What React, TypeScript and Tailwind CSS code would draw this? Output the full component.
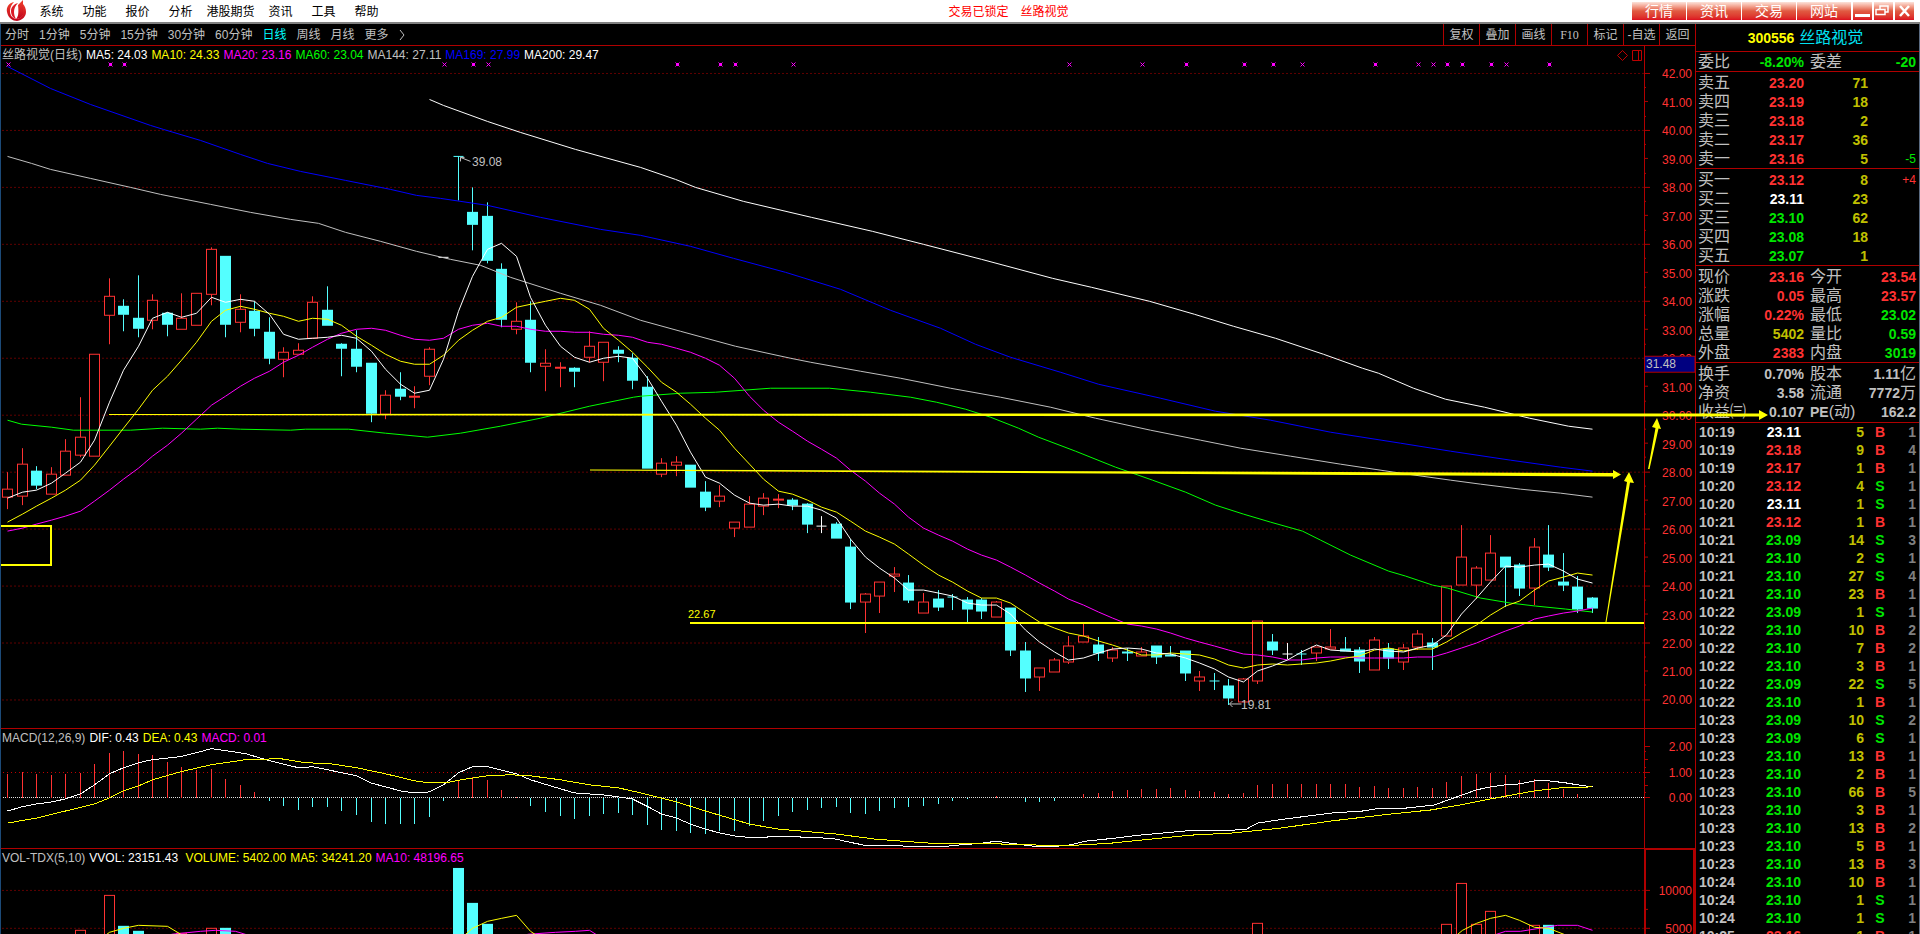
const RED = "#ff3232";
const CYAN = "#54ffff";
const LINE = "#b00000";

const menus = ["系统", "功能", "报价", "分析", "港股期货", "资讯", "工具", "帮助"];
const periods = ["分时", "1分钟", "5分钟", "15分钟", "30分钟", "60分钟", "日线", "周线", "月线", "更多"];
const tools = ["复权", "叠加", "画线", "F10", "标记", "-自选", "返回"];
const sites = ["行情", "资讯", "交易", "网站"];

// kind, high, body top, body bottom, low (all in chart y units)
type Candle = [string, number, number, number, number];
const candles: Candle[] = [
  ["r", 472, 489, 497, 509], ["r", 448, 464, 496, 505], ["c", 466, 471, 485, 489], ["r", 467, 474, 494, 494],
  ["r", 439, 451, 475, 475], ["r", 397, 437, 455, 457], ["r", 354, 354, 456, 456], ["r", 278, 296, 315, 344],
  ["c", 299, 306, 314, 331], ["c", 275, 318, 328, 337], ["r", 294, 300, 320, 329], ["c", 312, 313, 324, 336],
  ["r", 293, 318, 329, 329], ["r", 293, 293, 325, 325], ["r", 247, 249, 294, 305], ["c", 256, 256, 324, 337],
  ["r", 294, 309, 322, 332], ["c", 301, 311, 328, 336], ["c", 317, 332, 358, 364], ["r", 347, 352, 359, 377],
  ["r", 343, 350, 354, 354], ["r", 296, 302, 338, 338], ["c", 286, 310, 325, 325], ["c", 343, 344, 348, 376],
  ["c", 330, 349, 366, 372], ["c", 363, 363, 413, 422], ["r", 390, 395, 414, 419], ["c", 372, 389, 396, 400],
  ["r", 386, 396, 397, 408], ["r", 347, 349, 376, 385], ["w", 257, 257, 257, 257], ["c", 156, 156, 156, 200],
  ["c", 187, 212, 224, 250], ["c", 202, 216, 260, 263], ["c", 263, 269, 319, 327], ["r", 302, 321, 329, 334],
  ["c", 301, 320, 362, 372], ["r", 349, 363, 366, 391], ["r", 362, 367, 368, 387], ["c", 367, 368, 371, 387],
  ["r", 331, 346, 357, 362], ["r", 342, 342, 362, 381], ["c", 346, 350, 353, 362], ["c", 353, 358, 380, 389],
  ["c", 376, 387, 468, 468], ["r", 458, 463, 474, 477], ["r", 456, 462, 465, 476], ["c", 465, 465, 487, 487],
  ["c", 481, 492, 507, 511], ["r", 485, 496, 501, 507], ["r", 522, 522, 528, 537], ["r", 496, 504, 527, 527],
  ["r", 493, 498, 506, 515], ["r", 494, 499, 500, 508], ["c", 498, 500, 505, 510], ["c", 503, 504, 524, 533],
  ["w", 516, 526, 526, 533], ["c", 522, 524, 538, 538], ["c", 539, 547, 602, 609], ["r", 593, 594, 602, 633],
  ["r", 582, 582, 596, 613], ["r", 567, 574, 576, 592], ["c", 575, 583, 600, 603], ["r", 593, 602, 613, 613],
  ["c", 590, 599, 607, 611], ["c", 594, 597, 597, 610], ["c", 597, 600, 609, 623], ["c", 598, 600, 611, 619],
  ["r", 601, 602, 617, 617], ["c", 608, 608, 650, 656], ["c", 642, 651, 678, 692], ["r", 668, 668, 677, 691],
  ["r", 658, 660, 672, 672], ["r", 636, 646, 662, 664], ["r", 623, 636, 642, 642], ["c", 637, 645, 653, 661],
  ["r", 647, 650, 658, 662], ["c", 648, 652, 653, 661], ["r", 647, 652, 656, 656], ["c", 646, 646, 657, 664],
  ["c", 646, 655, 656, 656], ["c", 651, 651, 673, 681], ["r", 671, 677, 681, 691], ["c", 673, 681, 681, 690],
  ["c", 679, 686, 698, 705], ["r", 678, 679, 702, 702], ["r", 621, 621, 681, 684], ["c", 634, 642, 650, 655],
  ["w", 643, 654, 654, 659], ["c", 650, 654, 654, 665], ["r", 647, 647, 653, 661], ["r", 629, 647, 649, 649],
  ["c", 637, 649, 651, 651], ["c", 647, 650, 661, 673], ["r", 637, 640, 670, 670], ["c", 643, 649, 658, 669],
  ["r", 644, 648, 662, 670], ["r", 630, 634, 647, 650], ["c", 638, 643, 647, 670], ["r", 586, 586, 636, 636],
  ["r", 525, 557, 585, 585], ["r", 566, 568, 585, 599], ["r", 535, 553, 580, 580], ["c", 557, 557, 567, 607],
  ["c", 563, 565, 588, 596], ["r", 538, 547, 588, 605], ["c", 525, 555, 567, 571], ["c", 553, 582, 585, 591],
  ["c", 576, 587, 609, 613], ["c", 597, 598, 608, 613],
];

const macdBars = [
  774, 772, 774, 775, 774, 773, 764, 753, 751, 754, 755, 762, 767, 770, 769, 779, 785, 792, 801, 806,
  810, 807, 807, 811, 815, 822, 824, 824, 824, 817, 801, 781, 777, 780, 790, 797, 806, 812, 816, 819,
  816, 814, 813, 815, 825, 830, 831, 833, 834, 831, 831, 826, 821, 816, 812, 810, 808, 807, 813, 814,
  811, 808, 807, 806, 804, 801, 799, 798, 796, 798, 802, 802, 801, 798, 794, 793, 791, 790, 789, 789,
  788, 790, 791, 792, 794, 793, 785, 784, 784, 784, 784, 784, 784, 787, 786, 788, 788, 787, 788, 782,
  776, 774, 773, 775, 780, 779, 783, 789, 794, 798,
];

const volumes: [number, number][] = [
  [5, 930], [7, 895], [8, 926], [9, 931], [12, 933], [14, 928], [15, 928], [31, 868], [32, 903],
  [33, 924], [86, 923], [99, 924], [100, 883], [101, 924], [102, 911], [105, 925], [106, 925],
];

const signals = [0, 7, 8, 30, 32, 33, 46, 49, 50, 54, 73, 78, 81, 85, 87, 89, 94, 97, 98, 99, 100, 102, 103, 106];
const strongSignals = [7, 8, 32, 46, 49, 50, 81, 85, 87, 94, 99, 100, 102, 106];

const ma60 = "7,420 21,424 51,427 73,430 130,430 162,428 200,429 217,428 240,429 290,430 305,429 348,429 385,433 427,437 460,433 500,426 540,418 589,406 633,397 640,396 680,393 715,392 770,388 829,388 870,392 910,397 936,402 965,409 990,417 1018,428 1038,437 1075,451 1115,467 1152,480 1185,492 1215,505 1243,514 1270,522 1302,531 1320,540 1350,555 1388,571 1405,576 1432,585 1447,588 1480,598 1510,603 1535,606 1565,609 1592,612";
const ma144 = "7,156 31,163 50,169 90,178 130,187 160,194 210,204 250,212 290,219 318,223 345,232 380,241 416,251 450,259 480,265 510,277 560,293 600,305 640,320 680,331 735,346 790,358 810,362 860,371 900,378 950,388 1000,397 1050,407 1095,418 1150,430 1200,440 1240,448 1290,456 1340,464 1400,473 1450,480 1480,484 1520,489 1560,493 1592,497";
const ma169 = "7,66 50,88 90,104 150,125 163,129 200,140 240,154 267,163 300,171 345,180 390,189 416,195 440,198 487,205 540,217 600,229 640,235 690,246 733,258 785,272 840,289 890,310 940,328 975,344 1010,357 1060,372 1098,384 1160,398 1215,411 1270,420 1330,432 1400,443 1450,451 1510,460 1560,467 1592,471";
const ma200 = "429,99 443,105 487,121 520,132 575,149 640,167 675,179 695,187 743,201 811,217 872,231 923,244 981,259 1052,278 1091,287 1149,301 1194,314 1233,326 1275,338 1323,354 1362,368 1378,373 1413,388 1445,399 1484,407 1529,418 1568,426 1592,429";
const dif = "7,811 21,807 36,804 51,802 65,799 80,794 94,785 109,774 123,768 138,763 152,760 180,757 196,753 211,749 225,751 245,754 269,761 298,768 312,767 327,770 356,776 370,783 385,787 400,791 414,793 429,792 443,785 458,773 472,767 487,767 516,774 530,780 560,789 574,793 603,795 618,797 632,799 640,803 648,807 661,814 676,818 690,824 705,829 720,833 735,836 746,837 766,837 772,836 795,836 801,837 827,838 836,839 849,842 864,845 898,845 904,846 946,846 956,845 981,843 996,841 1010,843 1033,846 1056,846 1068,845 1085,841 1114,838 1139,835 1172,832 1194,830 1233,830 1246,829 1257,823 1284,819 1331,813 1362,811 1375,809 1397,809 1434,805 1445,801 1462,795 1476,790 1490,787 1505,785 1520,784 1534,781 1548,781 1565,783 1577,785 1592,787";
const dea = "7,823 36,818 65,811 94,804 109,798 123,791 138,786 152,780 180,772 211,765 245,760 280,759 305,763 330,764 356,768 385,774 414,781 429,783 446,783 460,780 487,776 510,775 530,776 560,780 589,785 618,788 640,793 676,802 705,811 749,824 778,829 837,834 875,839 930,843 1020,844 1040,845 1075,845 1110,843 1150,839 1190,835 1230,833 1280,828 1330,821 1390,814 1430,810 1460,805 1490,799 1534,791 1560,788 1592,787";
const volMa5 = ["105,935 109,932 123,928 138,925 167,926 182,935", "464,935 472,928 487,921 501,918 516,915 530,931 536,935", "1456,935 1462,930 1476,923 1490,918 1505,915 1519,920 1534,927 1548,928 1566,935"];
const volMa10 = ["171,934 200,931 215,930 235,931 248,935", "527,934 555,932 575,931 589,930 597,935", "1493,935 1505,931 1520,931 1545,927 1557,925 1577,925 1592,930"];

const xAt = (i: number) => Math.round(7 + 14.54 * i);
const closes = candles.map(([kind, , top, bottom]) => (kind === "c" ? bottom : top));

// moving average of the closes; lead holds the values that need older bars
const average = (n: number, lead: number[]) =>
  closes
    .map((_, i) => {
      const y = i < n - 1 ? lead[i] : closes.slice(i - n + 1, i + 1).reduce((a, b) => a + b, 0) / n;
      return `${xAt(i)},${Math.round(y)}`;
    })
    .join(" ");

const ma5 = average(5, [498, 492, 490, 483]);
const ma10 = average(10, [522, 514, 506, 498, 490, 480, 465, 446, 428]);
const ma20 = average(20, [531, 528, 524, 520, 516, 511, 501, 490, 479, 468, 456, 445, 433, 419, 405, 396, 386, 378, 371]);

const priceY = (p: number) => Math.round(73 + (42 - p) * 28.48);

const sells = [
  ["卖五", "23.20", "71", ""],
  ["卖四", "23.19", "18", ""],
  ["卖三", "23.18", "2", ""],
  ["卖二", "23.17", "36", ""],
  ["卖一", "23.16", "5", "-5"],
];
const buys = [
  ["买一", "23.12", "8", "+4"],
  ["买二", "23.11", "23", ""],
  ["买三", "23.10", "62", ""],
  ["买四", "23.08", "18", ""],
  ["买五", "23.07", "1", ""],
];

const R = "text-[#ff3232]";
const G = "text-[#00e600]";
const Y = "text-[#c0c000]";
const S = "text-[#c0c0c0]";
const stats = [
  ["现价", "23.16", R], ["今开", "23.54", R],
  ["涨跌", "0.05", R], ["最高", "23.57", R],
  ["涨幅", "0.22%", R], ["最低", "23.02", G],
  ["总量", "5402", Y], ["量比", "0.59", G],
  ["外盘", "2383", R], ["内盘", "3019", G],
];
const basics = [
  ["换手", "0.70%", ""], ["股本", "1.11", "亿"],
  ["净资", "3.58", ""], ["流通", "7772", "万"],
  ["收益㈢", "0.107", ""], ["PE(动)", "162.2", ""],
];

const ticks = [
  "10:19 23.11 5 B 1", "10:19 23.18 9 B 4", "10:19 23.17 1 B 1", "10:20 23.12 4 S 1", "10:20 23.11 1 S 1",
  "10:21 23.12 1 B 1", "10:21 23.09 14 S 3", "10:21 23.10 2 S 1", "10:21 23.10 27 S 4", "10:21 23.10 23 B 1",
  "10:22 23.09 1 S 1", "10:22 23.10 10 B 2", "10:22 23.10 7 B 2", "10:22 23.10 3 B 1", "10:22 23.09 22 S 5",
  "10:22 23.10 1 B 1", "10:23 23.09 10 S 2", "10:23 23.09 6 S 1", "10:23 23.10 13 B 1", "10:23 23.10 2 B 1",
  "10:23 23.10 66 B 5", "10:23 23.10 3 B 1", "10:23 23.10 13 B 2", "10:23 23.10 5 B 1", "10:23 23.10 13 B 3",
  "10:24 23.10 10 B 1", "10:24 23.10 1 S 1", "10:24 23.10 1 S 1", "10:25 23.16 1 B 1",
].map((t) => t.split(" "));

const priceColor = (p: string) => (p === "23.11" ? "text-white" : Number(p) > 23.11 ? R : G);

const Logo = () => (
  <svg viewBox="0 0 22 22" className="ml-[5px] h-[22px] w-[22px]" aria-hidden="true">
    <defs>
      <linearGradient id="logo" x1="0" y1="0" x2="0" y2="1">
        <stop offset="0" stopColor="#f0402c" />
        <stop offset="1" stopColor="#c0041c" />
      </linearGradient>
    </defs>
    <path d="M9 2C4 3 1 7 2 12c1 6 6 9 10 9 6-1 9-5 9-9 0-3-1-6-3-8v10c-1 3-4 5-7 5-4-1-6-4-6-8 0-4 2-7 4-9z" fill="url(#logo)" />
    <path d="M13 5l5-5v15c-2 3-4 4-7 4 2-2 3-5 2-14z" fill="url(#logo)" />
    <path d="M6 11c0-4 3-7 7-8-3 3-4 6-4 9 0 3 1 5 2 7-3-1-5-4-5-8z" fill="#dc1c28" />
  </svg>
);

const MenuBar = () => (
  <header className="flex h-6 shrink-0 items-center border-b-2 border-[#808080] bg-white text-xs text-black">
    <Logo />
    <nav className="ml-[3px] flex pt-px">
      {menus.map((m) => (
        <button key={m} className={m.length > 2 ? "w-[57px]" : "w-[43px]"}>{m}</button>
      ))}
    </nav>
    <div className="flex flex-1 justify-center gap-3 pt-px pr-[3px] text-[#ff0000]">
      <span>交易已锁定</span>
      <span>丝路视觉</span>
    </div>
    <div className="flex gap-px pr-[6px] text-sm leading-4 text-white">
      {sites.map((s) => (
        <button key={s} className="h-[18px] w-[54px] bg-linear-to-b from-[#fbe3da] via-[#e05a42] via-50% to-[#dc0c20]">{s}</button>
      ))}
      <div className="ml-px flex gap-[2px]">
        <button aria-label="最小化" className="h-[18px] w-[19px] bg-linear-to-b from-[#fbe3da] via-[#e05a42] via-50% to-[#dc0c20]">
          <svg viewBox="0 0 19 18" className="block h-full w-full"><path d="M2 13.5h15" stroke="#fff" strokeWidth="3" /></svg>
        </button>
        <button aria-label="还原" className="h-[18px] w-[19px] bg-linear-to-b from-[#fbe3da] via-[#e05a42] via-50% to-[#dc0c20]">
          <svg viewBox="0 0 19 18" className="block h-full w-full" fill="none" stroke="#fff" strokeWidth="1.5">
            <path d="M6 7V4h8v6h-3M2 7.500h9v5h-9z" />
          </svg>
        </button>
        <button aria-label="关闭" className="h-[18px] w-[19px] bg-linear-to-b from-[#fbe3da] via-[#e05a42] via-50% to-[#dc0c20]">
          <svg viewBox="0 0 19 18" className="block h-full w-full"><path d="M5 4l9 10M14 4L5 14" stroke="#fff" strokeWidth="2.500" /></svg>
        </button>
      </div>
    </div>
  </header>
);

const Toolbar = () => (
  <div className="flex h-[22px] shrink-0 justify-between border-b border-[#b00000]">
    <div className="flex items-center gap-[10px] pl-1">
      {periods.map((p) => (
        <button key={p} className={p === "日线" ? "text-[#00ffff]" : ""}>{p}</button>
      ))}
      <svg viewBox="0 0 6 12" className="h-3 w-[6px]" fill="none" stroke="#c0c0c0"><path d="M1 1l4 5-4 5" /></svg>
    </div>
    <div className="flex">
      {tools.map((t) => (
        <button key={t} className={`w-9 border-l border-[#b00000] whitespace-nowrap ${t === "F10" ? "font-['Liberation_Serif',serif]" : ""}`}>{t}</button>
      ))}
    </div>
  </div>
);

const Legend = ({ items }: { items: [string, string][] }) => (
  <div className="absolute top-px left-px flex gap-1 leading-4 whitespace-pre">
    {items.map(([text, color]) => (
      <span key={text} className={color}>{text}</span>
    ))}
  </div>
);

const Grid = ({ ys }: { ys: number[] }) => (
  <g stroke="#c00000" strokeDasharray="1 3">
    {ys.map((y) => <path key={y} d={`M2 ${y}H1644`} />)}
  </g>
);

const Line = ({ points, color }: { points: string; color: string }) => (
  <polyline points={points} fill="none" stroke={color} />
);

const PricePane = () => (
  <section className="flex min-h-0 flex-[684_0_0px] border-b border-[#b00000]">
    <div className="relative min-w-0 flex-1">
      <svg viewBox="1 46 1643 683" preserveAspectRatio="none" className="absolute h-full w-full" shapeRendering="crispEdges">
        <g transform="translate(0.5 0.5)">
          <Grid ys={[42, 40, 38, 36, 34, 32, 30, 28, 26, 24, 22, 20].map(priceY)} />
          {candles.map(([kind, high, top, bottom, low], i) => {
            const x = xAt(i);
            const color = kind === "r" ? RED : kind === "c" ? CYAN : "#fff";
            return (
              <g key={i} stroke={color} fill={kind === "r" ? "#000" : color}>
                <path d={`M${x} ${high}V${top}M${x} ${bottom}V${low}`} />
                {top === bottom ? <path d={`M${x - 5} ${top}h10`} /> : <rect x={x - 5} y={top} width={10} height={bottom - top} />}
              </g>
            );
          })}
          <Line points={ma200} color="#ffffff" />
          <Line points={ma169} color="#0000ff" />
          <Line points={ma144} color="#c0c0c0" />
          <Line points={ma60} color="#00ff00" />
          <Line points={ma20} color="#ff00ff" />
          <Line points={ma10} color="#ffff00" />
          <Line points={ma5} color="#ffffff" />
          <g stroke="#ff00ff" fill="#ff00ff">
            {signals.map((s) => (
              <path key={s} d={`M${xAt(s) - 1} 62l4 4M${xAt(s) + 3} 62l-4 4${strongSignals.includes(s) ? `M${xAt(s)} 63h2v2h-2z` : ""}`} />
            ))}
          </g>
          <path d="M1622 50l5 5-5 5-5-5zM1632 50h9v10h-9zM1638 50v10" fill="none" stroke="#c00000" />
          <path d="M470 161l-10-4m0 4v-4h4M1241 704h-12m3-3l-3 3 3 3" fill="none" stroke="#c0c0c0" />
          <path d="M0 526H50V565H0M689 623H1644" fill="none" stroke="#ffff00" strokeWidth="2" />
        </g>
        <text x="472" y="166" fontSize="12" fill="#c0c0c0">39.08</text>
        <text x="1241" y="710" fontSize="12" fill="#c0c0c0">19.81</text>
        <text x="688" y="618" fontSize="11" fill="#ffff00">22.67</text>
      </svg>
      <Legend
        items={[
          ["丝路视觉(日线)", S],
          ["MA5: 24.03", "text-white"],
          ["MA10: 24.33", "text-[#ffff00]"],
          ["MA20: 23.16", "text-[#ff00ff]"],
          ["MA60: 23.04", "text-[#00ff00]"],
          ["MA144: 27.11", S],
          ["MA169: 27.99", "text-[#0000ff]"],
          ["MA200: 29.47", "text-white"],
        ]}
      />
    </div>
    <div className="w-[51px] border-l border-[#b00000]">
      <svg viewBox="1645 46 50 683" preserveAspectRatio="none" className="block h-full w-full" shapeRendering="crispEdges">
        {Array.from({ length: 23 }, (_, i) => 42 - i).map((p) => (
          <g key={p}>
            <path d={`M1645 ${priceY(p) + 0.5}h${p % 2 ? 3 : 5}${p > 20 ? `M1645 ${priceY(p - 0.5) + 0.5}h1` : ""}`} stroke={LINE} />
            <text x="1692" y={priceY(p) + (p % 2 ? 6 : 5)} textAnchor="end" fontSize="12" fill={RED}>{p}.00</text>
          </g>
        ))}
        <rect x="1644" y="356.5" width="51" height="16" fill="#000080" stroke={LINE} />
        <text x="1646" y="368" fontSize="12" fill="#c0c0c0">31.48</text>
      </svg>
    </div>
  </section>
);

const MacdPane = () => (
  <section className="flex min-h-0 flex-[119_0_0px] border-b border-[#b00000]">
    <div className="relative min-w-0 flex-1">
      <svg viewBox="1 730 1643 118" preserveAspectRatio="none" className="absolute h-full w-full" shapeRendering="crispEdges">
        <g transform="translate(0.5 0.5)">
          <Grid ys={[773]} />
          <path d="M2 798H1644" stroke="#e0e0e0" strokeDasharray="1 1" />
          {macdBars.map((y, i) => (
            <path key={i} d={`M${xAt(i)} 798V${y}`} stroke={y < 798 ? RED : CYAN} />
          ))}
          <Line points={dif} color="#ffffff" />
          <Line points={dea} color="#ffff00" />
        </g>
      </svg>
      <Legend
        items={[
          ["MACD(12,26,9)", S],
          ["DIF: 0.43", "text-white"],
          ["DEA: 0.43", "text-[#ffff00]"],
          ["MACD: 0.01", "text-[#ff00ff]"],
        ]}
      />
    </div>
    <div className="w-[51px] border-l border-[#b00000]">
      <svg viewBox="1645 730 50 118" preserveAspectRatio="none" className="block h-full w-full" shapeRendering="crispEdges">
        <path d="M1645 747.500h5m-5 26h5m-5 25h5M1645 760.500h3m-3 26h3M1645 752.500h1m-1 16h1m-1 10h1m-1 15h1" stroke={LINE} />
        <g fontSize="12" fill={RED} textAnchor="end">
          <text x="1692" y="752">2.00</text>
          <text x="1692" y="778">1.00</text>
          <text x="1692" y="803">0.00</text>
        </g>
      </svg>
    </div>
  </section>
);

const VolumePane = () => (
  <section className="flex min-h-0 flex-[85_0_0px]">
    <div className="relative min-w-0 flex-1">
      <svg viewBox="1 849 1643 85" preserveAspectRatio="none" className="absolute h-full w-full" shapeRendering="crispEdges">
        <g transform="translate(0.5 0.5)">
          <Grid ys={[890, 928]} />
          {volumes.map(([i, y]) => (
            <rect
              key={i}
              x={xAt(i) - 5}
              y={y}
              width={10}
              height={940 - y}
              stroke={candles[i][0] === "r" ? RED : CYAN}
              fill={candles[i][0] === "r" ? "#000" : CYAN}
            />
          ))}
          {volMa10.map((p) => <Line key={p} points={p} color="#ff00ff" />)}
          {volMa5.map((p) => <Line key={p} points={p} color="#ffff00" />)}
        </g>
      </svg>
      <Legend
        items={[
          ["VOL-TDX(5,10)", S],
          ["VVOL: 23151.43 ", "text-white"],
          ["VOLUME: 5402.00", "text-[#ffff00]"],
          ["MA5: 34241.20", "text-[#ffff00]"],
          ["MA10: 48196.65", "text-[#ff00ff]"],
        ]}
      />
    </div>
    <div className="w-[51px] border-x-2 border-t border-[#b00000]">
      <svg viewBox="1646 850 47 84" preserveAspectRatio="none" className="block h-full w-full" shapeRendering="crispEdges">
        <path d="M1646 890.500h4m-4 38h4m-4-19h2" stroke={LINE} />
        <g fontSize="12" fill={RED} textAnchor="end">
          <text x="1692" y="895">10000</text>
          <text x="1692" y="933">5000</text>
        </g>
      </svg>
    </div>
  </section>
);

const OrderRows = ({ rows }: { rows: string[][] }) => (
  <div className="border-b border-[#b00000] pt-px">
    <table className="w-full table-fixed leading-4">
      <tbody>
        {rows.map(([label, price, qty, diff]) => (
          <tr key={label} className="h-[19px]">
            <th scope="row" className="w-[50px] pl-[2px] text-left text-base leading-4 font-normal">{label}</th>
            <td className={`w-[58px] text-right text-sm leading-4 font-bold ${priceColor(price)}`}>{price}</td>
            <td className="w-16 text-right text-sm leading-4 font-bold text-[#c0c000]">{qty}</td>
            <td className={`pr-[3px] text-right ${diff.startsWith("-") ? G : R}`}>{diff}</td>
          </tr>
        ))}
      </tbody>
    </table>
  </div>
);

const QuotePanel = () => (
  <aside className="flex w-[225px] shrink-0 flex-col overflow-hidden border-x border-l-[#b00000] border-r-[#5a6a80]">
    <h1 className="flex h-7 shrink-0 items-center justify-center gap-[5px] border-b border-[#b00000] pt-px pr-1">
      <span className="text-sm font-bold text-[#ffff00]">300556</span>
      <span className="text-base text-[#00e0f0]">丝路视觉</span>
    </h1>
    <dl className="grid h-5 shrink-0 grid-cols-2 items-center gap-x-[6px] border-b border-[#b00000] pr-[3px] pl-[2px]">
      {[["委比", "-8.20%"], ["委差", "-20"]].map(([k, v]) => (
        <div key={k} className="flex h-[19px] items-center justify-between">
          <dt className="text-base leading-4">{k}</dt>
          <dd className="text-sm leading-4 font-bold text-[#00e600]">{v}</dd>
        </div>
      ))}
    </dl>
    <OrderRows rows={sells} />
    <OrderRows rows={buys} />
    <dl className="grid grid-cols-2 gap-x-[6px] border-b border-[#b00000] pt-px pr-[3px] pl-[2px]">
      {stats.map(([k, v, color]) => (
        <div key={k} className="flex h-[19px] items-center justify-between">
          <dt className="text-base leading-4">{k}</dt>
          <dd className={`text-sm leading-4 font-bold ${color}`}>{v}</dd>
        </div>
      ))}
    </dl>
    <dl className="grid grid-cols-2 gap-x-[6px] border-b border-[#b00000] pt-px pr-[3px] pb-px pl-[2px]">
      {basics.map(([k, v, unit]) => (
        <div key={k} className="flex h-[19px] items-center justify-between">
          <dt className="text-base leading-4 whitespace-nowrap">
            {k.startsWith("PE") ? <><b className="text-sm leading-4">PE</b>(动)</> : k}
          </dt>
          <dd className="flex items-center text-sm leading-4">
            <b>{v}</b>
            <span className="text-base leading-4">{unit}</span>
          </dd>
        </div>
      ))}
    </dl>
    <table className="w-full table-fixed text-sm leading-4 font-bold">
      <tbody>
        {ticks.map(([time, price, qty, side, count], i) => (
          <tr key={i} className="h-[18px]">
            <td className="w-[45px] pl-[3px]">{time}</td>
            <td className={`w-[60px] text-right ${priceColor(price)}`}>{price}</td>
            <td className="w-[63px] text-right text-[#c0c000]">{qty}</td>
            <td className={`w-8 text-center ${side === "B" ? R : G}`}>{side}</td>
            <td className="pr-[3px] text-right text-[#808080]">{count}</td>
          </tr>
        ))}
      </tbody>
    </table>
  </aside>
);

// hand-drawn target arrows, laid over the chart and the quote panel
const Arrows = () => (
  <svg viewBox="0 24 1920 910" preserveAspectRatio="none" className="pointer-events-none absolute inset-0 h-full w-full" fill="#ffff00">
    <path d="M109 414L1000 413.500L1759 413.500V410L1768 415L1759 420V416.500L1000 416L109 415z" />
    <path d="M590 469.500L1613 473V470L1621 474.500L1613 479V476.500L590 470.500z" />
    <path d="M1605.500 622L1627 482L1624 481L1629 472L1634 483L1630 482.500L1606.500 622z" />
    <path d="M1648 469L1655.500 428L1652 427L1657 418L1661 429L1658.500 428.500L1649.500 469z" />
  </svg>
);

const App = () => {
  return (
    <div className="flex h-screen flex-col overflow-hidden bg-black font-['Liberation_Sans','Noto_Sans_CJK_SC',sans-serif] text-xs text-[#c0c0c0]">
      <MenuBar />
      <main className="relative flex min-h-0 flex-1">
        <div className="flex min-w-0 flex-1 flex-col border-l border-l-[#1c4a78]">
          <Toolbar />
          <PricePane />
          <MacdPane />
          <VolumePane />
        </div>
        <QuotePanel />
        <Arrows />
      </main>
    </div>
  );
};
export default App;
